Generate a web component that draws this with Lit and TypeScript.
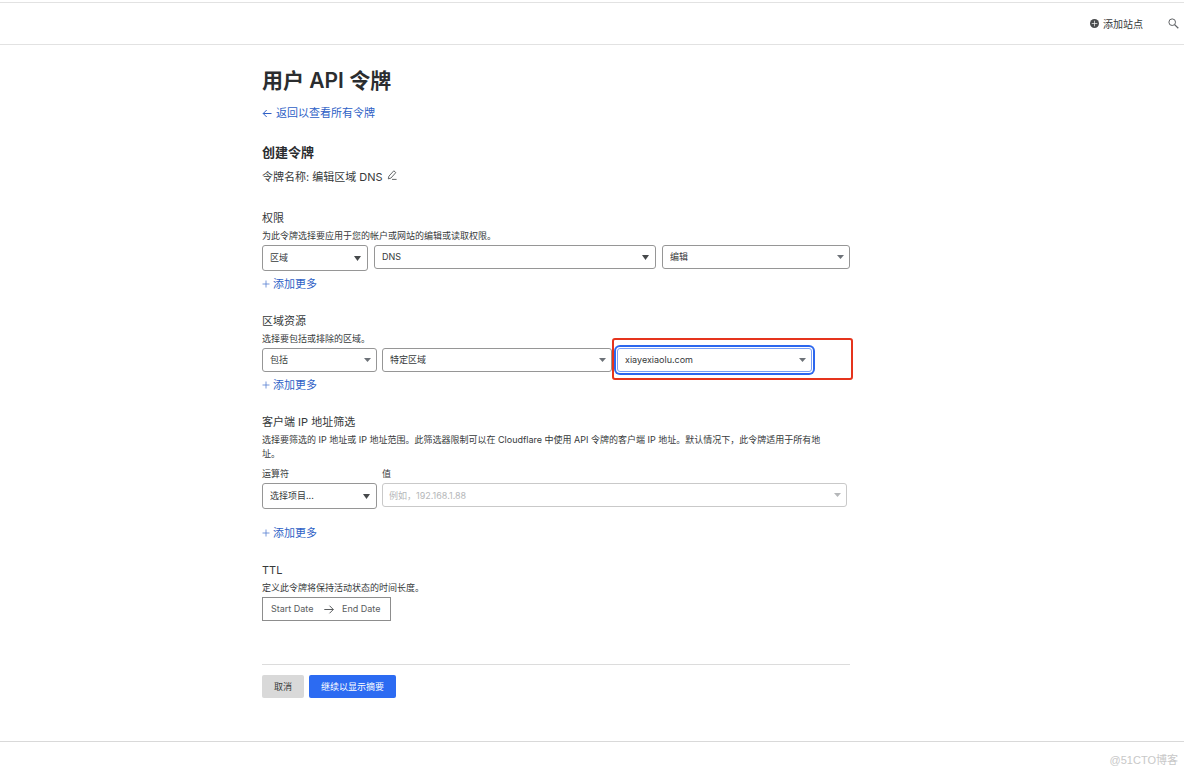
import { LitElement, html, css } from "lit";
import { customElement, property } from "lit/decorators.js";

const plus = html`<svg class="plus" viewBox="0 0 8 8" aria-hidden="true">
  <path d="M4 .5v7M.5 4h7" fill="none" stroke="currentColor" stroke-width=".8" />
</svg>`;

@customElement("select-box")
class SelectBox extends LitElement {
  @property() label = "";
  @property() value = "";
  @property({ type: Boolean, reflect: true }) tall = false;
  @property({ type: Boolean, reflect: true }) dark = false;
  @property({ type: Boolean, reflect: true }) active = false;

  static styles = css`
    :host {
      display: block;
      position: relative;
      min-width: 0;
      color: #6d7278;
    }
    .field {
      display: block;
      box-sizing: border-box;
      width: 100%;
      height: 24px;
      margin: 0;
      padding: 0 24px 0 7px;
      border: 1px solid #969696;
      border-radius: 3px;
      background: #fff;
      color: #36393a;
      font: inherit;
      appearance: none;
      outline: none;
    }
    :host([tall]) .field {
      height: 26px;
    }
    :host([active]) .field {
      border-color: #7ba0f5;
      box-shadow: 0 0 0 1px #fff, 0 0 0 3px #2c67ee;
    }
    .arrow {
      position: absolute;
      right: 6px;
      top: 50%;
      width: 7px;
      height: 4px;
      margin-top: -2px;
      pointer-events: none;
    }
    :host([dark]) {
      color: #46494b;
    }
    :host([dark]) .arrow {
      right: 7px;
      height: 5px;
    }
  `;

  render() {
    return html`
      <select class="field" aria-label=${this.label}>
        <option>${this.value}</option>
      </select>
      <svg class="arrow" viewBox="0 0 7 4" preserveAspectRatio="none" aria-hidden="true">
        <path d="M0 0h7L3.5 4z" fill="currentColor" />
      </svg>
    `;
  }
}

@customElement("app-root")
class AppRoot extends LitElement {
  static styles = css`
    :host {
      display: block;
      background: #fff;
      color: #36393a;
      font: 9px/14px Inter, "Noto Sans CJK SC", sans-serif;
    }
    .topbar {
      display: flex;
      align-items: center;
      justify-content: flex-end;
      gap: 25px;
      height: 41px;
      margin-top: 2px;
      padding-right: 5px;
      border-top: 1px solid #e2e2e2;
      border-bottom: 1px solid #e2e2e2;
    }
    button {
      margin: 0;
      padding: 0;
      border: 0;
      background: none;
      color: inherit;
      font: inherit;
      cursor: pointer;
    }
    .add-site {
      display: flex;
      align-items: center;
      gap: 4px;
      font-size: 10px;
    }
    .add-site svg {
      width: 9px;
      height: 9px;
    }
    .search {
      display: flex;
    }
    .search svg {
      width: 11px;
      height: 11px;
    }
    .page {
      padding: 22px 72px 43px 0;
      border-bottom: 1px solid #d9d9d9;
    }
    .content {
      max-width: 588px;
      margin: 0 auto;
    }
    h1 {
      margin: 0 0 9px;
      font-size: 21px;
      line-height: 28px;
      font-weight: 600;
      color: #2b2d2f;
    }
    a {
      color: #2e5fc6;
      text-decoration: none;
    }
    .back,
    .more {
      display: flex;
      align-items: center;
      width: max-content;
      font-size: 11px;
      line-height: 18px;
    }
    .back {
      gap: 4px;
    }
    .back svg {
      width: 10px;
      height: 9px;
    }
    .more {
      gap: 3px;
      margin-top: 4px;
      color: #2e5fc6;
    }
    .more.spaced {
      margin-top: 15px;
    }
    .plus {
      width: 8px;
      height: 8px;
      opacity: 0.8;
    }
    h2 {
      margin: 20px 0 7px;
      font-size: 13px;
      line-height: 20px;
      font-weight: 600;
      color: #2b2d2f;
    }
    .name {
      display: flex;
      align-items: flex-start;
      gap: 4px;
      font-size: 11px;
      line-height: 16px;
      margin-bottom: 25px;
    }
    .name svg {
      display: block;
      width: 10px;
      height: 12px;
    }
    section + section {
      margin-top: 20px;
    }
    h3 {
      margin: 0 0 3px;
      font-size: 11px;
      line-height: 16px;
      font-weight: 400;
    }
    p {
      margin: 0 0 2px;
    }
    .row {
      display: grid;
      align-items: start;
    }
    .permissions {
      grid-template-columns: 106px 3fr 2fr;
      gap: 6px;
    }
    .resources {
      grid-template-columns: 115px 230fr 195fr;
      gap: 5px;
      padding-right: 38px;
    }
    .filters {
      grid-template-columns: 115px 1fr;
      gap: 2px 5px;
      margin-top: 6px;
      padding-right: 3px;
    }
    .marked {
      position: relative;
    }
    .marked::after {
      content: "";
      position: absolute;
      inset: -10px -41px -8px -5px;
      border: 2px solid #e5341d;
      border-radius: 3px;
      pointer-events: none;
    }
    .value {
      position: relative;
      color: #b5b7b9;
    }
    .value svg {
      position: absolute;
      right: 6px;
      top: 10px;
      width: 7px;
      height: 4px;
    }
    input {
      box-sizing: border-box;
      margin: 0;
      background: none;
      color: inherit;
      font: inherit;
      outline: none;
    }
    input::placeholder {
      color: inherit;
      opacity: 1;
    }
    .value input {
      display: block;
      width: 100%;
      height: 24px;
      padding: 0 24px 0 6px;
      border: 1px solid #c9c9c9;
      border-radius: 3px;
    }
    .dates {
      display: flex;
      align-items: center;
      box-sizing: border-box;
      width: max-content;
      height: 24px;
      padding: 0 7px 0 8px;
      border: 1px solid #8d8d8d;
      color: #595c5e;
    }
    .dates input {
      width: 45px;
      padding: 0;
      border: 0;
    }
    .dates input:last-child {
      width: 41px;
    }
    .dates svg {
      width: 10px;
      height: 9px;
      margin: 0 8px;
    }
    .actions {
      display: flex;
      gap: 5px;
      margin-top: 43px;
      padding-top: 10px;
      border-top: 1px solid #dcdcdc;
    }
    .actions button {
      height: 23px;
      padding: 0 12px;
      border-radius: 2px;
      background: #d9d9d9;
    }
    .actions .primary {
      background: #2c6bf2;
      color: #fff;
    }
    footer {
      padding: 9px 6px 0;
      text-align: right;
      font: 11px/18px "Liberation Sans", "Noto Sans CJK SC", sans-serif;
      color: #c8c8c8;
    }
  `;

  private more(spaced = false) {
    return html`<button class="more ${spaced ? "spaced" : ""}">${plus}添加更多</button>`;
  }

  render() {
    return html`
      <header class="topbar">
        <button class="add-site">
          <svg viewBox="0 0 16 16" aria-hidden="true">
            <circle cx="8" cy="8" r="8" fill="#4a4c4e" />
            <path d="M8 3v10M3 8h10" stroke="#fff" stroke-width="1.2" />
          </svg>
          添加站点
        </button>
        <button class="search" aria-label="搜索">
          <svg viewBox="0 0 11 11" fill="none" stroke="#606366" aria-hidden="true">
            <circle cx="4.2" cy="4.2" r="3.3" stroke-width="1" />
            <path d="M6.6 6.6l3.7 3.7" stroke-width="1.3" />
          </svg>
        </button>
      </header>
      <main class="page">
        <div class="content">
          <h1>用户 API 令牌</h1>
          <a class="back" href="#">
            <svg viewBox="0 0 10 9" fill="none" stroke="currentColor" aria-hidden="true">
              <path d="M9.5 4.5H1.2M4.7 1L1.2 4.5 4.7 8" />
            </svg>
            返回以查看所有令牌
          </a>
          <h2>创建令牌</h2>
          <div class="name">
            <span>令牌名称: 编辑区域 DNS</span>
            <button aria-label="编辑名称">
              <svg viewBox="0 -1 10 12" fill="none" stroke="#55585a" stroke-width=".9" aria-hidden="true">
                <path d="M1.3 8.9l.6-2.7L6.8.8l2 1.8-4.9 5.5zM5 9.4h4.6" />
              </svg>
            </button>
          </div>

          <section>
            <h3>权限</h3>
            <p>为此令牌选择要应用于您的帐户或网站的编辑或读取权限。</p>
            <div class="row permissions">
              <select-box tall dark label="范围" value="区域"></select-box>
              <select-box dark label="权限项" value="DNS"></select-box>
              <select-box label="级别" value="编辑"></select-box>
            </div>
            ${this.more()}
          </section>

          <section>
            <h3>区域资源</h3>
            <p>选择要包括或排除的区域。</p>
            <div class="row resources">
              <select-box label="方式" value="包括"></select-box>
              <select-box label="区域类型" value="特定区域"></select-box>
              <div class="marked">
                <select-box active label="区域" value="xiayexiaolu.com"></select-box>
              </div>
            </div>
            ${this.more()}
          </section>

          <section>
            <h3>客户端 IP 地址筛选</h3>
            <p>
              选择要筛选的 IP 地址或 IP 地址范围。此筛选器限制可以在 Cloudflare 中使用 API 令牌的客户端 IP 地址。默认情况下，此令牌适用于所有地<br />址。
            </p>
            <div class="row filters">
              <span>运算符</span>
              <label for="ip">值</label>
              <select-box tall dark label="运算符" value="选择项目..."></select-box>
              <div class="value">
                <input id="ip" placeholder="例如，192.168.1.88" />
                <svg viewBox="0 0 7 4" aria-hidden="true"><path d="M0 0h7L3.5 4z" fill="currentColor" /></svg>
              </div>
            </div>
            ${this.more(true)}
          </section>

          <section>
            <h3>TTL</h3>
            <p>定义此令牌将保持活动状态的时间长度。</p>
            <div class="dates">
              <input aria-label="Start Date" placeholder="Start Date" />
              <svg viewBox="0 0 10 9" fill="none" stroke="currentColor" aria-hidden="true">
                <path d="M.3 4.5h9M5.5.7l3.8 3.8-3.8 3.8" />
              </svg>
              <input aria-label="End Date" placeholder="End Date" />
            </div>
          </section>

          <div class="actions">
            <button>取消</button>
            <button class="primary">继续以显示摘要</button>
          </div>
        </div>
      </main>
      <footer>@51CTO博客</footer>
    `;
  }
}
